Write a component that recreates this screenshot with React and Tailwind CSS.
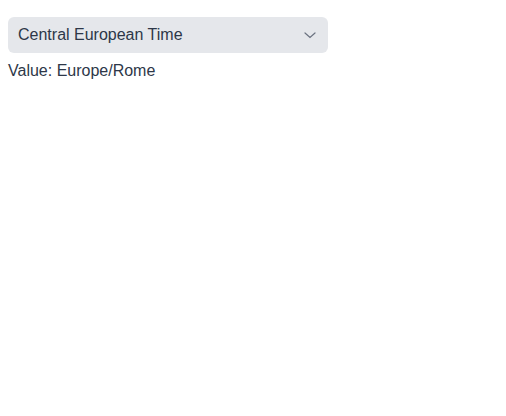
export default function App() {
  return (
    <div className="p-2 pt-[17px] font-['Liberation_Sans',Arial,sans-serif] text-[#2d3748]">
      <button
        type="button"
        className="flex h-9 w-80 items-center justify-between rounded-md bg-[#e5e7eb] pl-2.5 pr-3 text-base text-[#2d3748]"
      >
        <span>Central European Time</span>
        <svg width="12" height="7" viewBox="0 0 12 7" fill="none">
          <path d="M1 1l5 4.5 5-4.5" stroke="#6b7280" strokeWidth="1.2" strokeLinecap="round" />
        </svg>
      </button>
      <p className="mt-1.5 text-base">Value: Europe/Rome</p>
    </div>
  )
}
